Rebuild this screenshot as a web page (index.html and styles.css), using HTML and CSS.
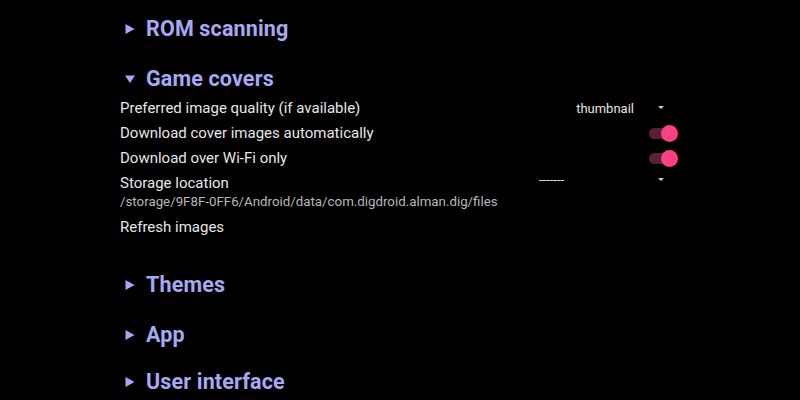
FILE: index.html
```html
<!DOCTYPE html>
<html>
<head>
<meta charset="utf-8">
<link rel="stylesheet" href="styles.css">
</head>
<body>
<div class="settings">
  <div class="section-head first">
    <svg class="tri" viewBox="0 0 10 10" width="10" height="10"><polygon points="0.5,0 9.5,5 0.5,10"/></svg>
    <span>ROM scanning</span>
  </div>
  <div class="section-head">
    <svg class="tri" viewBox="0 0 10 10" width="10" height="10"><polygon points="0,1.5 10,1.5 5,9"/></svg>
    <span>Game covers</span>
  </div>
  <div class="section-body">
    <div class="pref">
      <span class="pref-title">Preferred image quality (if available)</span>
      <div class="dropdown">
        <span class="dropdown-value">thumbnail</span>
        <span class="caret"></span>
      </div>
    </div>
    <div class="pref">
      <span class="pref-title">Download cover images automatically</span>
      <div class="toggle"><span class="track"></span><span class="thumb"></span></div>
    </div>
    <div class="pref">
      <span class="pref-title">Download over Wi-Fi only</span>
      <div class="toggle"><span class="track"></span><span class="thumb"></span></div>
    </div>
    <div class="pref pref-storage">
      <div class="pref-text">
        <div class="pref-title">Storage location</div>
        <div class="pref-summary">/storage/9F8F-0FF6/Android/data/com.digdroid.alman.dig/files</div>
      </div>
      <div class="dropdown dropdown-wide">
        <span class="dropdown-value">-------</span>
        <span class="caret"></span>
      </div>
    </div>
    <div class="pref pref-refresh">
      <span class="pref-title">Refresh images</span>
    </div>
  </div>
  <div class="section-head">
    <svg class="tri" viewBox="0 0 10 10" width="10" height="10"><polygon points="0.5,0 9.5,5 0.5,10"/></svg>
    <span>Themes</span>
  </div>
  <div class="section-head">
    <svg class="tri" viewBox="0 0 10 10" width="10" height="10"><polygon points="0.5,0 9.5,5 0.5,10"/></svg>
    <span>App</span>
  </div>
  <div class="section-head last">
    <svg class="tri" viewBox="0 0 10 10" width="10" height="10"><polygon points="0.5,0 9.5,5 0.5,10"/></svg>
    <span>User interface</span>
  </div>
</div>
</body>
</html>
```

FILE: styles.css
```css
html, body {
  margin: 0;
  padding: 0;
  background: #000;
  width: 800px;
  height: 400px;
  overflow: hidden;
  font-family: Roboto, "Noto Sans", sans-serif;
}

.settings {
  width: 558px;
  padding: 12px 0 0 120px;
  display: flex;
  flex-direction: column;
}

.section-head {
  height: 34px;
  display: flex;
  align-items: center;
  gap: 11px;
  padding-left: 5px;
  color: #a8a8f2;
  font-size: 21.5px;
  font-weight: 700;
  letter-spacing: 0.15px;
  line-height: 34px;
  margin-top: 16px;
}

.section-head.first {
  margin-top: 0;
}

.section-head.last {
  margin-top: 13px;
}

.tri {
  fill: #a8a8f2;
  flex: none;
}

.section-body {
  display: flex;
  flex-direction: column;
  padding-bottom: 12px;
}

.pref {
  display: flex;
  justify-content: space-between;
  align-items: center;
  height: 25px;
  color: #e6e6e6;
  font-size: 15px;
  line-height: 25px;
}

.pref-storage {
  height: auto;
  align-items: flex-start;
}

.pref-summary {
  color: #b8b8b8;
  font-size: 13.3px;
  line-height: 18px;
  margin-top: -3px;
}

.pref-refresh {
  margin-top: 4px;
}

.dropdown {
  display: flex;
  align-items: center;
  gap: 24px;
  padding-right: 14px;
  font-size: 13px;
  line-height: 18px;
  color: #e6e6e6;
}

.dropdown-wide {
  width: 125px;
  justify-content: space-between;
  gap: 0;
  height: 18px;
}

.caret {
  width: 0;
  height: 0;
  border-left: 3.5px solid transparent;
  border-right: 3.5px solid transparent;
  border-top: 3.5px solid #d0d0d0;
  margin-top: -2px;
}

.toggle {
  position: relative;
  width: 29px;
  height: 17px;
}

.track {
  position: absolute;
  left: 0;
  top: 3px;
  width: 26px;
  height: 11px;
  border-radius: 6px;
  background: #5c1e3a;
}

.thumb {
  position: absolute;
  right: 0;
  top: 0;
  width: 17px;
  height: 17px;
  border-radius: 50%;
  background: #ff4081;
}
```
